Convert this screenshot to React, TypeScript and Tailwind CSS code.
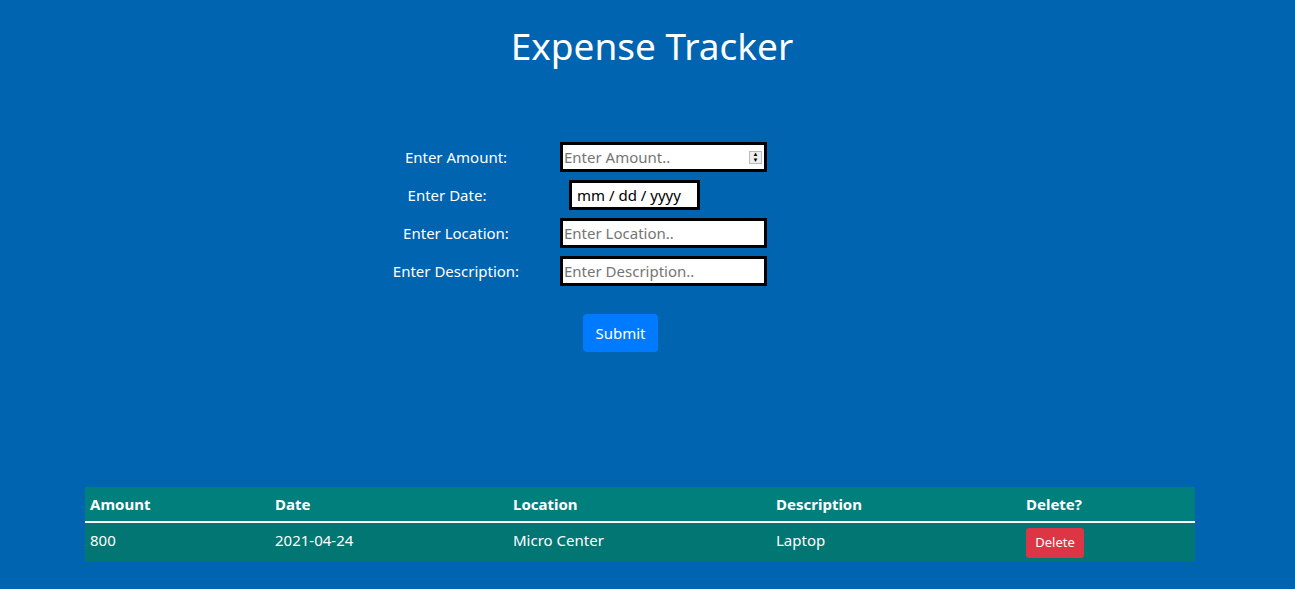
import { useState } from 'react';

type Expense = {
  amount: string;
  date: string;
  location: string;
  description: string;
};

const fields = [
  { label: 'Enter Amount:', placeholder: 'Enter Amount..', kind: 'number' },
  { label: 'Enter Date:', placeholder: '', kind: 'date' },
  { label: 'Enter Location:', placeholder: 'Enter Location..', kind: 'text' },
  { label: 'Enter Description:', placeholder: 'Enter Description..', kind: 'text' },
];

export default function App() {
  const [expenses] = useState<Expense[]>([
    { amount: '800', date: '2021-04-24', location: 'Micro Center', description: 'Laptop' },
  ]);

  return (
    <div className="min-h-[589px] bg-[#0064b1] text-white font-['Noto_Sans',sans-serif]">
      <div className="w-[1280px]">
        <h1 className="pt-[24px] pl-[24px] text-center text-[37px] leading-[1.2] font-normal">Expense Tracker</h1>

        <div className="mt-[74px] ml-[373px] flex flex-col gap-2">
          {fields.map((f) => (
            <div key={f.label} className="flex items-center">
              <label className={f.kind === 'date' ? 'w-[166px] pr-[18px] text-center text-[15px]' : 'w-[166px] text-center text-[15px]'}>
                {f.label}
              </label>
              {f.kind === 'date' ? (
                <div className="ml-[30px] flex h-[30px] w-[131px] items-center border-[3px] border-black bg-white pl-[5px] text-[15px] text-black">
                  mm / dd / yyyy
                </div>
              ) : (
                <div className="ml-[21px] flex h-[30px] w-[207px] items-center border-[3px] border-black bg-white pl-[1px] pr-[2px]">
                  <span className="flex-1 text-[15px] text-[#757575]">{f.placeholder}</span>
                  {f.kind === 'number' && (
                    <span className="flex h-[13px] w-[13px] flex-col items-center justify-center border border-[#bbb] bg-[#eee] text-[6px] leading-[6px] text-black">
                      <span>▲</span>
                      <span>▼</span>
                    </span>
                  )}
                </div>
              )}
            </div>
          ))}
        </div>

        <button className="mt-[28px] ml-[583px] h-[38px] w-[75px] rounded-[4px] bg-[#007bff] text-[15px] text-white">Submit</button>

        <div className="mx-auto mt-[135px] w-[1110px]">
          <table className="w-full border-collapse text-[15px]">
            <thead>
              <tr className="bg-[#017f7c] border-b-2 border-white">
                <th className="w-[185px] px-[5px] pt-[6px] pb-[5px] text-left font-bold">Amount</th>
                <th className="w-[238px] px-[5px] pt-[6px] pb-[5px] text-left font-bold">Date</th>
                <th className="w-[263px] px-[5px] pt-[6px] pb-[5px] text-left font-bold">Location</th>
                <th className="w-[250px] px-[5px] pt-[6px] pb-[5px] text-left font-bold">Description</th>
                <th className="px-[5px] pt-[6px] pb-[5px] text-left font-bold">Delete?</th>
              </tr>
            </thead>
            <tbody>
              {expenses.map((e, i) => (
                <tr key={i} className="bg-[#017672]">
                  <td className="px-[5px] py-[6px] align-top">{e.amount}</td>
                  <td className="px-[5px] py-[6px] align-top">{e.date}</td>
                  <td className="px-[5px] py-[6px] align-top">{e.location}</td>
                  <td className="px-[5px] py-[6px] align-top">{e.description}</td>
                  <td className="px-[5px] pt-[5px] pb-[4px]">
                    <button className="h-[30px] w-[58px] rounded-[3px] bg-[#dc3545] text-[13px] text-white">Delete</button>
                  </td>
                </tr>
              ))}
            </tbody>
          </table>
        </div>
      </div>
    </div>
  );
}
